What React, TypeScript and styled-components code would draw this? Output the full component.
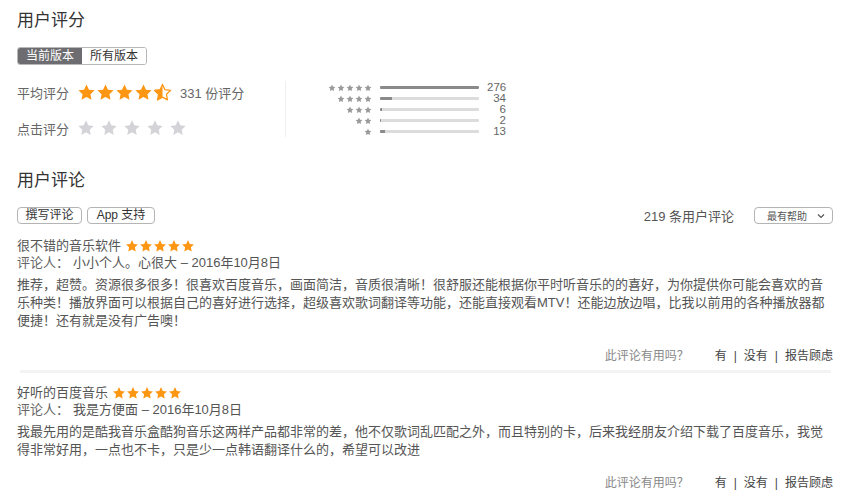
import React from "react";
import styled, { createGlobalStyle } from "styled-components";

const Global = createGlobalStyle`
  html, body { margin: 0; padding: 0; background: #fff; }
  body { font-family: "Liberation Sans", "Noto Sans CJK SC", sans-serif; color: #555; }
`;

const Page = styled.div`
  width: 847px;
  box-sizing: border-box;
  padding: 9px 14px 0 17px;
`;

const Title = styled.h2`
  margin: 0;
  font-size: 17px;
  font-weight: normal;
  color: #333;
  line-height: 24px;
`;

const Segmented = styled.div`
  display: inline-flex;
  margin-top: 14px;
  border: 1px solid #b8b8b8;
  border-radius: 3px;
  overflow: hidden;
`;

const Segment = styled.div<{ $active?: boolean }>`
  width: 64px;
  height: 16px;
  line-height: 16px;
  text-align: center;
  font-size: 12px;
  background: ${(p) => (p.$active ? "#6d6d71" : "#fff")};
  color: ${(p) => (p.$active ? "#fff" : "#333")};
`;

const RatingArea = styled.div`
  display: flex;
  margin-top: 14px;
  height: 60px;
`;

const RatingLeft = styled.div`
  width: 268px;
  display: flex;
  flex-direction: column;
  gap: 14px;
  padding-top: 3px;
`;

const RatingRow = styled.div`
  display: flex;
  align-items: center;
  height: 22px;
  font-size: 13px;
`;

const RatingLabel = styled.span`
  color: #666;
  width: 60px;
`;

const StarRow = styled.div<{ $gap: number }>`
  display: flex;
  align-items: center;
  gap: ${(p) => p.$gap}px;
`;

const CountText = styled.span`
  margin-left: 8px;
  color: #666;
`;

const Divider = styled.div`
  width: 1px;
  background: #f0f0f0;
  height: 56px;
  margin-top: 2px;
`;

const Histogram = styled.div`
  display: grid;
  grid-template-columns: 86px 99px 19px;
  grid-auto-rows: 11px;
  column-gap: 8px;
  align-items: center;
  margin-top: 3px;
`;

const HistStars = styled.div`
  display: flex;
  justify-content: flex-end;
  gap: 1px;
  align-items: center;
`;

const Track = styled.div`
  height: 3px;
  background: #dcdcdc;
  border-radius: 1px;
  overflow: hidden;
`;

const Fill = styled.div`
  height: 100%;
  background: #8a8a8a;
`;

const HistCount = styled.div`
  font-size: 11.5px;
  color: #666;
  text-align: right;
  line-height: 11px;
  white-space: nowrap;
`;

const ReviewsTitle = styled(Title)`
  margin-top: 30px;
`;

const Toolbar = styled.div`
  display: flex;
  align-items: center;
  margin-top: 13px;
`;

const Button = styled.button<{ $w: number }>`
  width: ${(p) => p.$w}px;
  height: 17px;
  padding: 0;
  margin-right: 5px;
  border: 1px solid #b4b4b4;
  border-radius: 4px;
  background: #fff;
  font-family: inherit;
  font-size: 12px;
  color: #333;
  line-height: 15px;
`;

const Spacer = styled.div`
  flex: 1;
`;

const TotalCount = styled.span`
  font-size: 13px;
  color: #555;
  margin-right: 20px;
`;

const Select = styled.div`
  width: 79px;
  height: 17px;
  box-sizing: border-box;
  border: 1px solid #b4b4b4;
  border-radius: 4px;
  display: flex;
  align-items: center;
  justify-content: space-between;
  padding: 0 7px 0 12px;
  font-size: 10px;
  color: #555;
`;

const Review = styled.div<{ $top: number }>`
  margin-top: ${(p) => p.$top}px;
`;

const ReviewTitle = styled.div`
  display: flex;
  align-items: center;
  gap: 4px;
  font-size: 13px;
  color: #555;
  line-height: 17px;
`;

const Reviewer = styled.div`
  font-size: 13px;
  line-height: 18px;
  color: #666;
  span {
    margin-left: 4px;
    color: #555;
  }
`;

const Body = styled.p`
  margin: 4px 0 0;
  font-size: 13px;
  line-height: 18px;
  color: #555;
  width: 816px;
`;

const Helpful = styled.div<{ $gap: number }>`
  display: flex;
  justify-content: flex-end;
  margin-top: ${(p) => p.$gap}px;
  font-size: 12px;
  line-height: 16px;
  color: #444;
`;

const HelpfulQ = styled.span`
  color: #888;
  margin-right: 26px;
`;

const Sep = styled.span`
  margin: 0 7px;
`;

const Rule = styled.div`
  height: 3px;
  margin: 6px 2px 0 3px;
  background: #f3f3f3;
`;

const STAR = "M12 1.8l3.1 6.6 7.1.9-5.2 4.9 1.3 7.1L12 17.8l-6.3 3.5 1.3-7.1L1.8 9.3l7.1-.9z";

function Star({ size, color, half }: { size: number; color: string; half?: boolean }) {
  if (half) {
    return (
      <svg width={size} height={size} viewBox="0 0 24 24">
        <defs>
          <clipPath id="lh">
            <rect x="0" y="0" width="12" height="24" />
          </clipPath>
        </defs>
        <path d={STAR} fill="none" stroke={color} strokeWidth="1.6" strokeLinejoin="round" />
        <path d={STAR} fill={color} clipPath="url(#lh)" />
      </svg>
    );
  }
  return (
    <svg width={size} height={size} viewBox="0 0 24 24">
      <path d={STAR} fill={color} />
    </svg>
  );
}

const ORANGE = "#fd9612";

const hist = [
  { stars: 5, count: 276 },
  { stars: 4, count: 34 },
  { stars: 3, count: 6 },
  { stars: 2, count: 2 },
  { stars: 1, count: 13 },
];

const reviews = [
  {
    title: "很不错的音乐软件",
    author: "小小个人。心很大 – 2016年10月8日",
    body:
      "推荐，超赞。资源很多很多！很喜欢百度音乐，画面简洁，音质很清晰！很舒服还能根据你平时听音乐的的喜好，为你提供你可能会喜欢的音乐种类！播放界面可以根据自己的喜好进行选择，超级喜欢歌词翻译等功能，还能直接观看MTV！还能边放边唱，比我以前用的各种播放器都便捷！还有就是没有广告噢！",
    top: 12,
    gap: 18,
  },
  {
    title: "好听的百度音乐",
    author: "我是方便面 – 2016年10月8日",
    body:
      "我最先用的是酷我音乐盒酷狗音乐这两样产品都非常的差，他不仅歌词乱匹配之外，而且特别的卡，后来我经朋友介绍下载了百度音乐，我觉得非常好用，一点也不卡，只是少一点韩语翻译什么的，希望可以改进",
    top: 11,
    gap: 16,
  },
];

export default function App() {
  return (
    <>
      <Global />
      <Page>
        <Title>用户评分</Title>
        <Segmented>
          <Segment $active>当前版本</Segment>
          <Segment>所有版本</Segment>
        </Segmented>
        <RatingArea>
          <RatingLeft>
            <RatingRow>
              <RatingLabel>平均评分</RatingLabel>
              <StarRow $gap={0}>
                {[0, 1, 2, 3].map((i) => (
                  <Star key={i} size={19} color={ORANGE} />
                ))}
                <Star size={19} color={ORANGE} half />
              </StarRow>
              <CountText>331 份评分</CountText>
            </RatingRow>
            <RatingRow>
              <RatingLabel>点击评分</RatingLabel>
              <StarRow $gap={5}>
                {[0, 1, 2, 3, 4].map((i) => (
                  <Star key={i} size={18} color="#d4d4d8" />
                ))}
              </StarRow>
            </RatingRow>
          </RatingLeft>
          <Divider />
          <Histogram>
            {hist.map((h) => (
              <React.Fragment key={h.stars}>
                <HistStars>
                  {Array.from({ length: h.stars }).map((_, i) => (
                    <Star key={i} size={8} color="#9a9a9a" />
                  ))}
                </HistStars>
                <Track>
                  <Fill style={{ width: `${Math.max(1, (h.count / 276) * 100)}%` }} />
                </Track>
                <HistCount>{h.count}</HistCount>
              </React.Fragment>
            ))}
          </Histogram>
        </RatingArea>

        <ReviewsTitle>用户评论</ReviewsTitle>
        <Toolbar>
          <Button $w={65}>撰写评论</Button>
          <Button $w={68}>App 支持</Button>
          <Spacer />
          <TotalCount>219 条用户评论</TotalCount>
          <Select>
            最有帮助
            <svg width="8" height="6" viewBox="0 0 8 6">
              <path d="M1 1.5l3 3 3-3" fill="none" stroke="#555" strokeWidth="1.2" />
            </svg>
          </Select>
        </Toolbar>

        {reviews.map((r, idx) => (
          <Review key={idx} $top={r.top}>
            <ReviewTitle>
              {r.title}
              <StarRow $gap={0}>
                {[0, 1, 2, 3, 4].map((i) => (
                  <Star key={i} size={14} color={ORANGE} />
                ))}
              </StarRow>
            </ReviewTitle>
            <Reviewer>
              评论人：<span>{r.author}</span>
            </Reviewer>
            <Body>{r.body}</Body>
            <Helpful $gap={r.gap}>
              <HelpfulQ>此评论有用吗？</HelpfulQ>
              有<Sep>|</Sep>没有<Sep>|</Sep>报告顾虑
            </Helpful>
            {idx === 0 && <Rule />}
          </Review>
        ))}
      </Page>
    </>
  );
}
